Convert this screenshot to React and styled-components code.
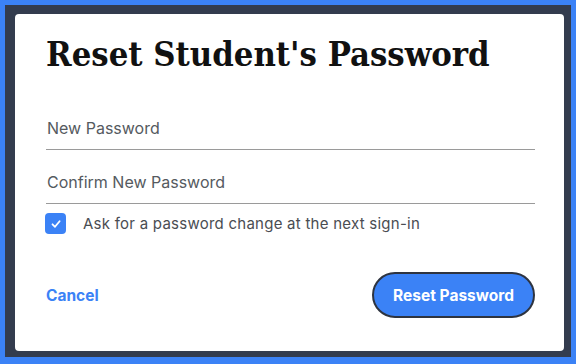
import React from "react";
import styled, { createGlobalStyle } from "styled-components";

const Global = createGlobalStyle`
  html, body { margin: 0; padding: 0; }
  body { background: #3b82f6; font-family: Inter, "Noto Sans", sans-serif; }
`;

const Frame = styled.div`
  width: 576px;
  height: 364px;
  box-sizing: border-box;
  padding: 5px 5px 7px 5px;
  background: #3b82f6;
`;

const Overlay = styled.div`
  height: 100%;
  box-sizing: border-box;
  background: #333c4e;
  padding: 9px 7px 6px 10px;
  display: flex;
`;

const Card = styled.div`
  flex: 1;
  background: #ffffff;
  border-radius: 4px;
  padding: 20px 29px 0 31px;
  box-sizing: border-box;
  display: flex;
  flex-direction: column;
`;

const Title = styled.h1`
  margin: 0 0 21px 0;
  font-family: "DejaVu Serif Condensed", "DejaVu Serif", serif;
  font-weight: bold;
  font-size: 34.3px;
  line-height: 41px;
  color: #111111;
  letter-spacing: 0;
`;

const Field = styled.label`
  display: block;
  padding: 20px 0 9px 1px;
  border-bottom: 1px solid #9a9a9a;
  font-size: 16px;
  line-height: 24px;
  color: #555a60;
`;

const CheckRow = styled.label`
  display: flex;
  align-items: center;
  gap: 17px;
  margin-top: 9px;
  font-size: 15px;
  letter-spacing: 0.25px;
  line-height: 20px;
  color: #4a4d52;
`;

const Box = styled.span`
  width: 21px;
  height: 21px;
  border-radius: 4px;
  background: #3b82f6;
  display: flex;
  align-items: center;
  justify-content: center;
  margin-left: -1px;
`;

const Footer = styled.div`
  display: flex;
  align-items: center;
  justify-content: space-between;
  margin-top: 38px;
`;

const TextButton = styled.button`
  border: none;
  background: none;
  padding: 0;
  font-family: Inter, sans-serif;
  font-weight: 700;
  font-size: 15.5px;
  color: #3b82f6;
`;

const PrimaryButton = styled.button`
  width: 163px;
  height: 46px;
  box-sizing: border-box;
  border: 2px solid #2e3440;
  border-radius: 23px;
  background: #3b82f6;
  color: #ffffff;
  font-family: Inter, sans-serif;
  font-weight: 700;
  font-size: 15.5px;
`;

export default function App() {
  return (
    <>
      <Global />
      <Frame>
        <Overlay>
          <Card>
            <Title>Reset Student's Password</Title>
            <Field>New Password</Field>
            <Field>Confirm New Password</Field>
            <CheckRow>
              <Box>
                <svg width="12" height="12" viewBox="0 0 12 12">
                  <polyline points="2.5,6.3 5,8.8 9.6,3.2" fill="none" stroke="#fff" strokeWidth="1.8" strokeLinecap="round" strokeLinejoin="round" />
                </svg>
              </Box>
              Ask for a password change at the next sign-in
            </CheckRow>
            <Footer>
              <TextButton>Cancel</TextButton>
              <PrimaryButton>Reset Password</PrimaryButton>
            </Footer>
          </Card>
        </Overlay>
      </Frame>
    </>
  );
}
